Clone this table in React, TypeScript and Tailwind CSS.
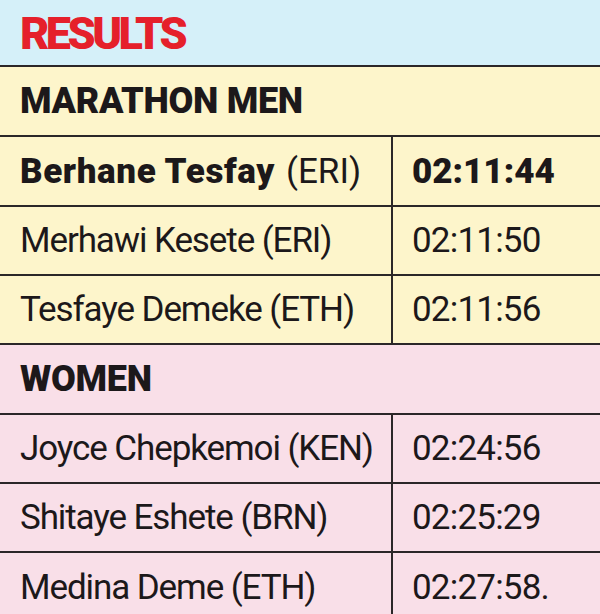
import React from "react";

type Row = { name: string; bold?: boolean; country: string; time: string; h: string };

const men: Row[] = [
  { name: "Berhane Tesfay", bold: true, country: "(ERI)", time: "02:11:44", h: "h-[70px]" },
  { name: "Merhawi Kesete", country: "(ERI)", time: "02:11:50", h: "h-[69px]" },
  { name: "Tesfaye Demeke", country: "(ETH)", time: "02:11:56", h: "h-[69px]" },
];

const women: Row[] = [
  { name: "Joyce Chepkemoi", country: "(KEN)", time: "02:24:56", h: "h-[69px]" },
  { name: "Shitaye Eshete", country: "(BRN)", time: "02:25:29", h: "h-[69px]" },
  { name: "Medina Deme", country: "(ETH)", time: "02:27:58.", h: "h-[70px]" },
];

function DataRow({ r }: { r: Row }) {
  return (
    <div className={`flex shrink-0 border-t-2 border-[#2b2728] ${r.h}`}>
      <div className="w-[391px] flex items-center pl-5 leading-none text-[#1c181a] whitespace-nowrap">
        {r.bold ? (
          <>
            <span className="text-[35px] font-black tracking-[0.6px]">{r.name}</span>
            <span className="ml-[11px] text-[35px] tracking-[0px]">{r.country}</span>
          </>
        ) : (
          <span className="text-[35px] tracking-[-1.1px]">
            {r.name} {r.country}
          </span>
        )}
      </div>
      <div
        className={`flex-1 border-l-2 border-[#2b2728] flex items-center pl-[19px] leading-none text-[#1c181a] whitespace-nowrap ${
          r.bold ? "font-black text-[35px]" : "text-[35px] tracking-[-0.8px]"
        }`}
      >
        {r.time}
      </div>
    </div>
  );
}

export default function App() {
  return (
    <div className="w-[600px] h-[614px] overflow-hidden font-['Roboto',sans-serif]">
      <div className="h-[65px] bg-[#d5f0f9] flex items-start pl-5 pt-[11px]">
        <span className="text-[45px] leading-none font-black text-[#e5202b] tracking-[-3.5px]">
          RESULTS
        </span>
      </div>
      <div className="bg-[#fdf5cb]">
        <div className="h-[70px] border-t-2 border-[#2b2728] flex items-center pl-5">
          <span className="text-[36px] leading-none font-black text-[#1c181a] tracking-[-0.3px]">
            MARATHON MEN
          </span>
        </div>
        {men.map((r) => (
          <DataRow key={r.name} r={r} />
        ))}
      </div>
      <div className="bg-[#f9dfe8]">
        <div className="h-[70px] border-t-2 border-[#2b2728] flex items-center pl-5">
          <span className="text-[36px] leading-none font-black text-[#1c181a] tracking-[-0.3px]">
            WOMEN
          </span>
        </div>
        {women.map((r) => (
          <DataRow key={r.name} r={r} />
        ))}
      </div>
    </div>
  );
}
